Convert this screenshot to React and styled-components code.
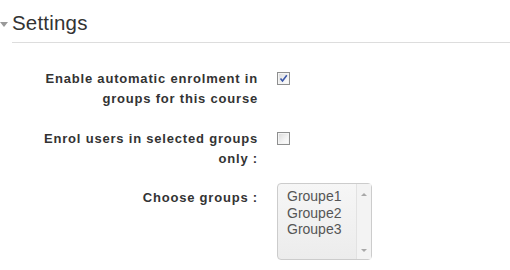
import React from "react";
import styled, { createGlobalStyle } from "styled-components";

const Global = createGlobalStyle`
  html, body { margin: 0; padding: 0; background: #fff; }
  body { font-family: "Liberation Sans", Arial, sans-serif; color: #333; }
`;

const Page = styled.div`
  width: 510px;
  height: 270px;
  overflow: hidden;
`;

const Legend = styled.div`
  display: flex;
  align-items: flex-start;
`;

const Toggle = styled.span`
  width: 12px;
  flex: none;
  display: flex;
  margin-top: 22px;
  &::before {
    content: "";
    border-left: 4px solid transparent;
    border-right: 4px solid transparent;
    border-top: 5px solid #999;
  }
`;

const Title = styled.h2`
  flex: 1;
  margin: 0;
  padding: 11px 0 7px;
  font-size: 20.5px;
  line-height: 24px;
  font-weight: normal;
  letter-spacing: 0.2px;
  color: #333;
  border-bottom: 1px solid #ddd;
`;

const Form = styled.div`
  display: flex;
  flex-direction: column;
  padding-top: 26px;
`;

const Row = styled.div`
  display: grid;
  grid-template-columns: 222px auto;
  column-gap: 20px;
  margin-left: 35px;
  margin-top: ${(p) => p.$space || 0}px;
  align-items: start;
`;

const Label = styled.div`
  text-align: right;
  font-weight: bold;
  font-size: 13px;
  line-height: 20px;
  letter-spacing: 0.8px;
  color: #333;
  padding-top: ${(p) => p.$pad || 0}px;
  margin-right: -1px;
`;

const Box = styled.span`
  display: block;
  width: 11px;
  height: 11px;
  margin-top: 3px;
  border: 1px solid #8e8f8f;
  background: linear-gradient(135deg, #d8d8d8 0%, #f4f4f4 60%, #fdfdfd 100%);
  box-shadow: inset 0 0 0 1px #f4f4f4;
  position: relative;
  svg { position: absolute; left: 1px; top: 1px; }
`;

const Select = styled.div`
  width: 93px;
  height: 75px;
  border: 1px solid #ccc;
  border-radius: 4px;
  background: linear-gradient(#f6f6f6, #ececec);
  display: flex;
  box-sizing: content-box;
`;

const Options = styled.div`
  flex: 1;
  padding: 4px 0 0 9px;
  font-size: 14px;
  line-height: 16.5px;
  color: #555;
`;

const Scroll = styled.div`
  width: 14px;
  border-left: 1px solid #e2e2e2;
  background: #f3f3f3;
  display: flex;
  flex-direction: column;
  justify-content: space-between;
  align-items: center;
  padding: 9px 0 7px;
`;

const Arrow = styled.span`
  border-left: 3px solid transparent;
  border-right: 3px solid transparent;
  ${(p) =>
    p.$up
      ? "border-bottom: 3px solid #a8a8a8;"
      : "border-top: 3px solid #a8a8a8;"}
`;

function Checkbox({ checked }) {
  return (
    <Box>
      {checked && (
        <svg width="9" height="9" viewBox="0 0 9 9">
          <path d="M1.5 4.5 L3.5 7 L7.8 1.2" fill="none" stroke="#3b57a8" strokeWidth="1.6" />
        </svg>
      )}
    </Box>
  );
}

export default function App() {
  return (
    <Page>
      <Global />
      <Legend>
        <Toggle />
        <Title>Settings</Title>
      </Legend>
      <Form>
        <Row>
          <Label>Enable automatic enrolment in groups for this course</Label>
          <Checkbox checked />
        </Row>
        <Row $space={20}>
          <Label>Enrol users in selected groups only :</Label>
          <Checkbox />
        </Row>
        <Row $space={14}>
          <Label $pad={5}>Choose groups :</Label>
          <Select>
            <Options>
              <div>Groupe1</div>
              <div>Groupe2</div>
              <div>Groupe3</div>
            </Options>
            <Scroll>
              <Arrow $up />
              <Arrow />
            </Scroll>
          </Select>
        </Row>
      </Form>
    </Page>
  );
}
